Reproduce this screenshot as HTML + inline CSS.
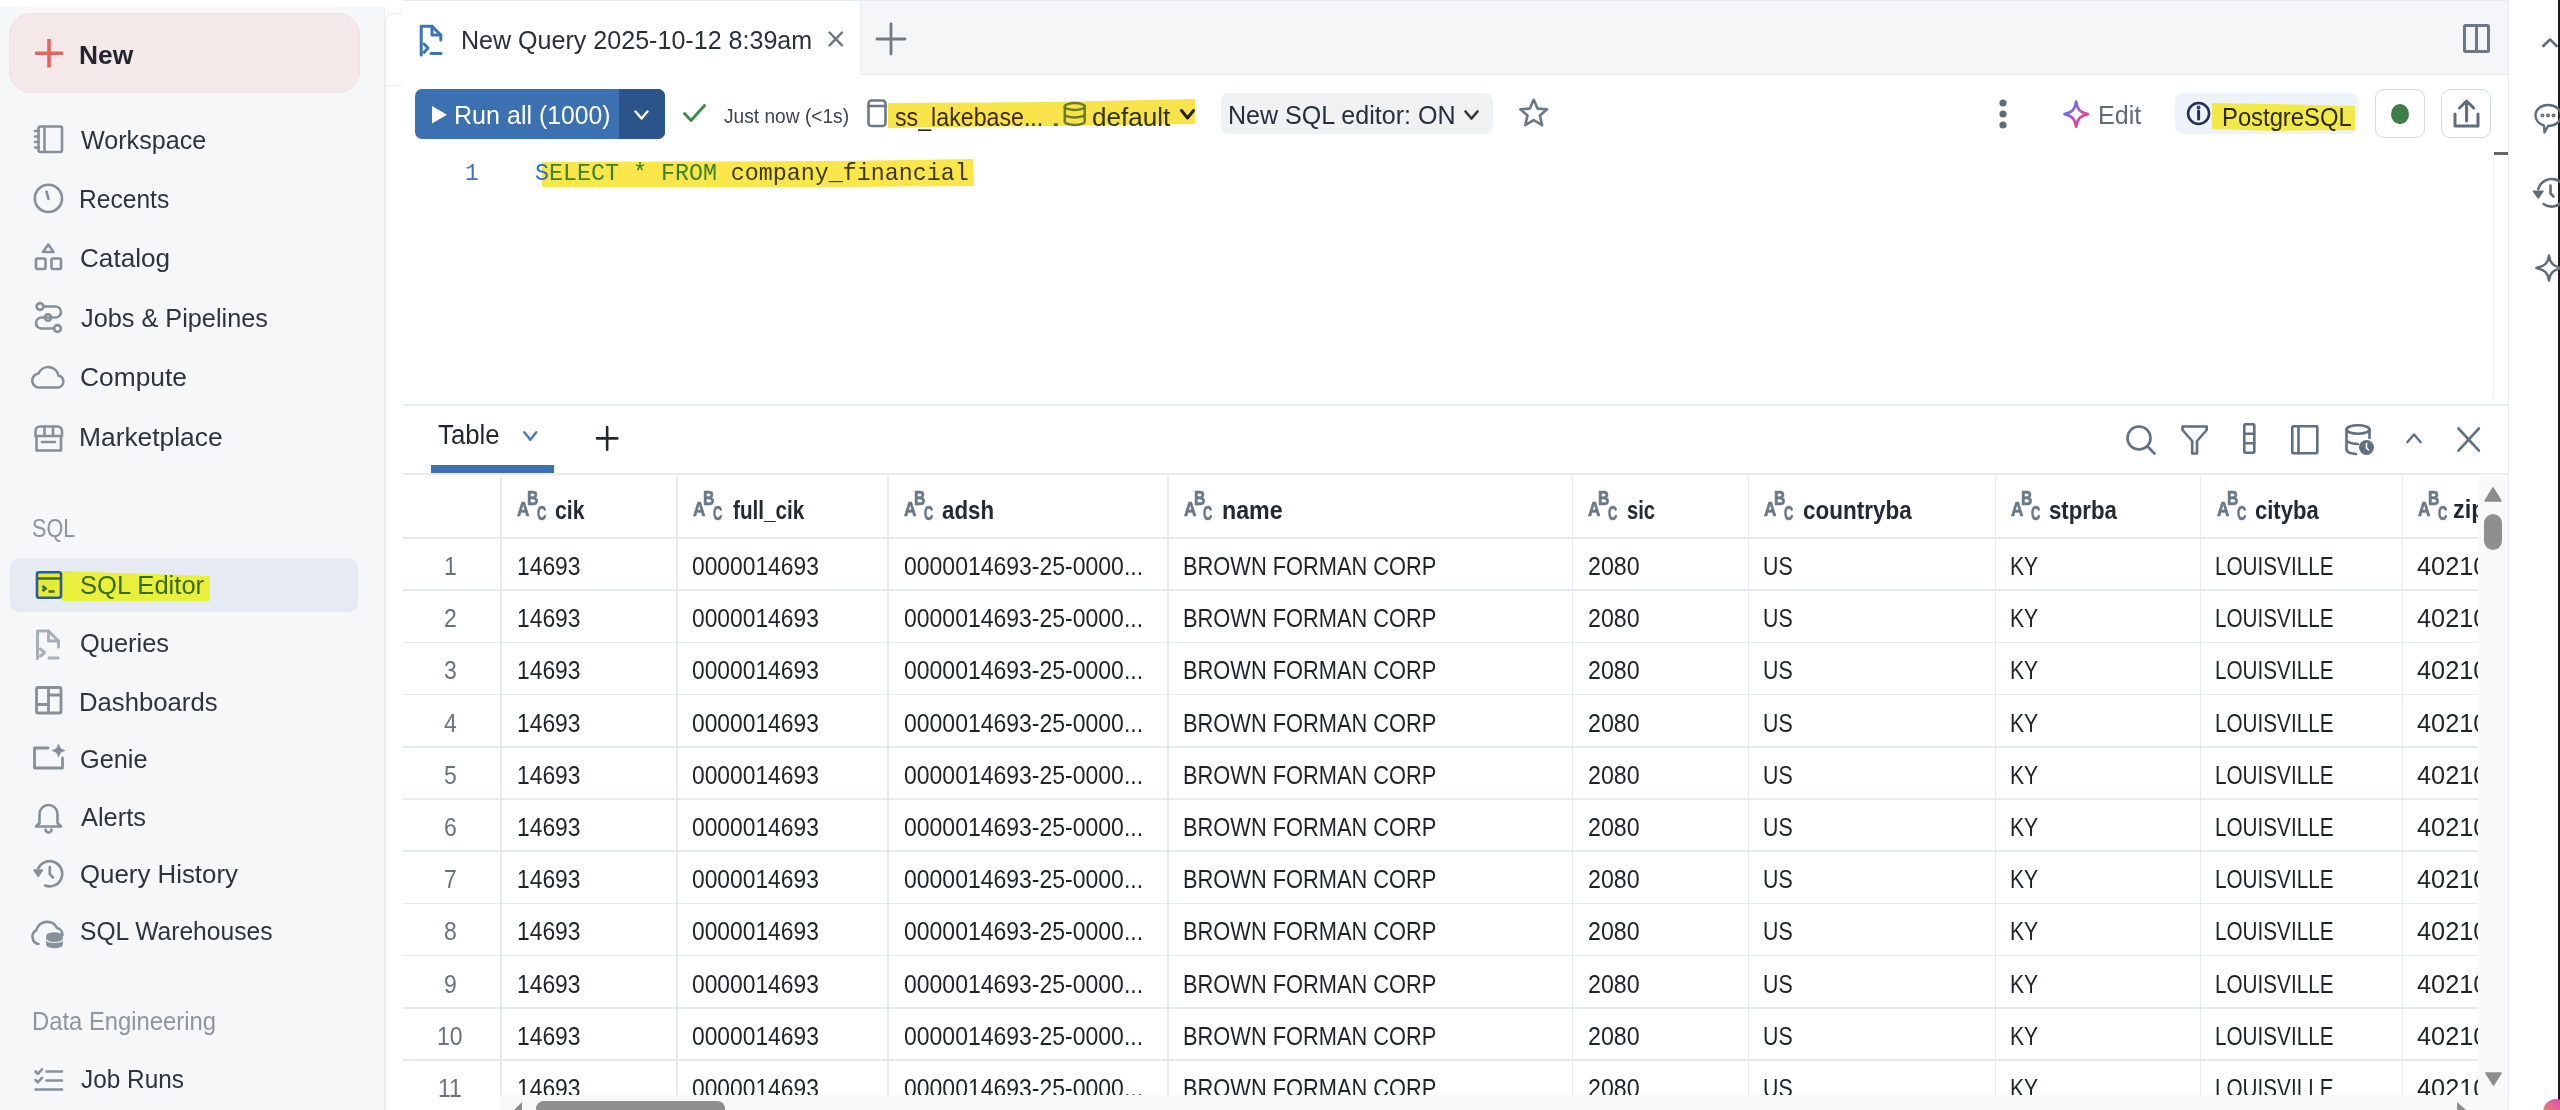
<!DOCTYPE html><html><head><meta charset="utf-8"><style>
html,body{margin:0;padding:0;width:2560px;height:1110px;overflow:hidden;background:#fff;}
.t{position:absolute;white-space:nowrap;transform-origin:0 0;}
.r{position:absolute;box-sizing:border-box;}
svg.r{overflow:visible}
#wrap{position:absolute;left:0;top:0;width:2560px;height:1110px;overflow:hidden;filter:blur(0.65px);}
</style></head><body><div id="wrap">
<div class="r" style="left:0px;top:7px;width:385px;height:1103px;background:#f6f7f9;"></div>
<div class="r" style="left:384px;top:7px;width:1px;height:1103px;background:#eceef1;"></div>
<div class="r" style="left:0px;top:7px;width:1px;height:1103px;background:#fbfbfc;"></div>
<div class="r" style="left:9px;top:12.6px;width:351px;height:80.9px;background:#f4e8e9;border:1px solid #f1e0e1;border-radius:22px;"></div>
<svg class="r" style="left:35px;top:39px;width:28px;height:28.5px;" viewBox="0 0 28 28" preserveAspectRatio="none"><path d="M14 0V28M0 14H28" stroke="#e8625e" stroke-width="3.6"/></svg>
<div class="t" style="left:79.29px;top:41.79px;font-size:26px;line-height:26px;font-family:'Liberation Sans',sans-serif;font-weight:700;color:#1f2630;transform:scaleX(1.0141);">New</div>
<div class="t" style="left:80.87px;top:126.99px;font-size:26px;line-height:26px;font-family:'Liberation Sans',sans-serif;font-weight:400;color:#2d3440;transform:scaleX(0.9666);">Workspace</div>
<div class="t" style="left:79.03px;top:185.99px;font-size:26px;line-height:26px;font-family:'Liberation Sans',sans-serif;font-weight:400;color:#2d3440;transform:scaleX(0.9456);">Recents</div>
<div class="t" style="left:79.69px;top:244.99px;font-size:26px;line-height:26px;font-family:'Liberation Sans',sans-serif;font-weight:400;color:#2d3440;transform:scaleX(1.0049);">Catalog</div>
<div class="t" style="left:80.62px;top:304.99px;font-size:26px;line-height:26px;font-family:'Liberation Sans',sans-serif;font-weight:400;color:#2d3440;transform:scaleX(0.9724);">Jobs &amp; Pipelines</div>
<div class="t" style="left:79.68px;top:364.49px;font-size:26px;line-height:26px;font-family:'Liberation Sans',sans-serif;font-weight:400;color:#2d3440;transform:scaleX(1.0140);">Compute</div>
<div class="t" style="left:78.89px;top:423.99px;font-size:26px;line-height:26px;font-family:'Liberation Sans',sans-serif;font-weight:400;color:#2d3440;transform:scaleX(1.0143);">Marketplace</div>
<div class="t" style="left:32.03px;top:515.29px;font-size:26px;line-height:26px;font-family:'Liberation Sans',sans-serif;font-weight:400;color:#8d959d;transform:scaleX(0.8312);">SQL</div>
<div class="r" style="left:9.7px;top:557.6px;width:347.90000000000003px;height:54.39999999999998px;background:#e6ebf3;border-radius:9px;"></div>
<svg class="r" style="left:60px;top:568px;width:152px;height:36px" viewBox="0 0 152 36"><path d="M2 3 L150 8 L150 33 L2 33 Z" fill="#e8f03c"/></svg>
<div class="t" style="left:79.85px;top:571.99px;font-size:26px;line-height:26px;font-family:'Liberation Sans',sans-serif;font-weight:400;color:#3b6a12;transform:scaleX(0.9836);">SQL Editor</div>
<div class="t" style="left:79.86px;top:630.39px;font-size:26px;line-height:26px;font-family:'Liberation Sans',sans-serif;font-weight:400;color:#2d3440;transform:scaleX(0.9784);">Queries</div>
<div class="t" style="left:78.95px;top:689.29px;font-size:26px;line-height:26px;font-family:'Liberation Sans',sans-serif;font-weight:400;color:#2d3440;transform:scaleX(0.9880);">Dashboards</div>
<div class="t" style="left:79.74px;top:745.99px;font-size:26px;line-height:26px;font-family:'Liberation Sans',sans-serif;font-weight:400;color:#2d3440;transform:scaleX(0.9728);">Genie</div>
<div class="t" style="left:81.00px;top:803.69px;font-size:26px;line-height:26px;font-family:'Liberation Sans',sans-serif;font-weight:400;color:#2d3440;transform:scaleX(0.9768);">Alerts</div>
<div class="t" style="left:79.84px;top:860.79px;font-size:26px;line-height:26px;font-family:'Liberation Sans',sans-serif;font-weight:400;color:#2d3440;transform:scaleX(0.9937);">Query History</div>
<div class="t" style="left:79.89px;top:917.99px;font-size:26px;line-height:26px;font-family:'Liberation Sans',sans-serif;font-weight:400;color:#2d3440;transform:scaleX(0.9471);">SQL Warehouses</div>
<div class="t" style="left:31.59px;top:1008.29px;font-size:26px;line-height:26px;font-family:'Liberation Sans',sans-serif;font-weight:400;color:#8d959d;transform:scaleX(0.9159);">Data Engineering</div>
<div class="t" style="left:80.63px;top:1065.69px;font-size:26px;line-height:26px;font-family:'Liberation Sans',sans-serif;font-weight:400;color:#2d3440;transform:scaleX(0.9369);">Job Runs</div>
<svg class="r" style="left:33px;top:124px;width:32px;height:31px" viewBox="33 124 32 31"><g fill="none" stroke="#86909b" stroke-width="2.6" stroke-linejoin="round" stroke-linecap="round"><rect x="38.5" y="126.5" width="23.5" height="25.5" rx="2"/><path d="M44.5 126.5V152"/><path d="M35 131H39M35 136.5H39M35 142H39M35 147.5H39"/></g></svg>
<svg class="r" style="left:32px;top:182px;width:34px;height:34px" viewBox="32 182 34 34"><g fill="none" stroke="#86909b" stroke-width="2.6" stroke-linejoin="round" stroke-linecap="round"><circle cx="48.4" cy="198.4" r="13.6"/><path d="M46.5 191.5L48.5 199"/></g></svg>
<svg class="r" style="left:32px;top:241px;width:34px;height:32px" viewBox="32 241 34 32"><g fill="none" stroke="#86909b" stroke-width="2.6" stroke-linejoin="round" stroke-linecap="round"><path d="M48.3 244.5L53.5 252H43Z"/><rect x="36" y="258.5" width="9.5" height="10.5" rx="1.5"/><rect x="51.5" y="258.5" width="9.5" height="10.5" rx="1.5"/></g></svg>
<svg class="r" style="left:32px;top:300px;width:34px;height:36px" viewBox="32 300 34 36"><g fill="none" stroke="#86909b" stroke-width="2.6" stroke-linejoin="round" stroke-linecap="round"><circle cx="40" cy="306.5" r="3.4"/><path d="M43.4 306.5H55.5a5.5 5.5 0 0 1 0 11H41.5a5.5 5.5 0 0 0 0 11H54"/><circle cx="48" cy="317.5" r="3.2"/><circle cx="57.5" cy="328.5" r="3.4"/></g></svg>
<svg class="r" style="left:31px;top:362px;width:36px;height:29px" viewBox="31 362 36 29"><g fill="none" stroke="#86909b" stroke-width="2.6" stroke-linejoin="round" stroke-linecap="round"><path d="M40 387.5H57.5a6 6 0 0 0 1-11.9A10.5 10.5 0 0 0 38.5 373.5A7 7 0 0 0 40 387.5Z"/></g></svg>
<svg class="r" style="left:33px;top:422px;width:32px;height:32px" viewBox="33 422 32 32"><g fill="none" stroke="#86909b" stroke-width="2.6" stroke-linejoin="round" stroke-linecap="round"><path d="M36.5 436V450.5H61V436"/><path d="M35.5 431.5A4.5 4.5 0 0 1 40 426.5H57.5A4.5 4.5 0 0 1 62 431.5V436H35.5Z"/><path d="M44.5 426.5V436M53 426.5V436"/><path d="M42 442H55"/></g></svg>
<svg class="r" style="left:34px;top:569px;width:30px;height:32px" viewBox="34 569 30 32"><rect x="37" y="572.3" width="24" height="25.5" rx="2" fill="#e3ec3a" stroke="#2f5b93" stroke-width="2.6"/><path d="M38 578.5H60" stroke="#3d6a1a" stroke-width="2.4"/><path d="M42.5 586l3 2.5-3 2.5M48.5 591.5h6" stroke="#3d6a1a" stroke-width="2.6" fill="none"/></svg>
<svg class="r" style="left:34px;top:627px;width:30px;height:35px" viewBox="34 627 30 35"><g fill="none" stroke="#a7b0b9" stroke-width="3" stroke-linejoin="round" stroke-linecap="round"><path d="M37.5 658.5V631H48.5L58.5 641V647"/><path d="M48.5 631V641H58.5"/><path d="M40.5 649l4 3.5-4 3.5M49 658h9"/></g></svg>
<svg class="r" style="left:33px;top:684px;width:32px;height:33px" viewBox="33 684 32 33"><g fill="none" stroke="#86909b" stroke-width="2.8" stroke-linejoin="round" stroke-linecap="round"><rect x="36.5" y="687.5" width="24.5" height="25.5" rx="1.5"/><path d="M48.5 687.5V713M36.5 704.5H48.5M48.5 695H61"/></g></svg>
<svg class="r" style="left:31px;top:743px;width:35px;height:29px" viewBox="31 743 35 29"><g fill="none" stroke="#86909b" stroke-width="2.8" stroke-linejoin="round" stroke-linecap="round"><path d="M48 748H34.5V768H62.5V758"/></g></svg>
<svg class="r" style="left:52px;top:743px;width:14px;height:15px" viewBox="52 743 14 15"><path d="M58.5 744.5Q59.5 749.5 64.5 750.5Q59.5 751.5 58.5 756.5Q57.5 751.5 52.5 750.5Q57.5 749.5 58.5 744.5Z" fill="#86909b" stroke="#86909b" stroke-width="1.2" stroke-linejoin="round"/></svg>
<svg class="r" style="left:33px;top:799px;width:31px;height:35px" viewBox="33 799 31 35"><g fill="none" stroke="#86909b" stroke-width="2.6" stroke-linejoin="round" stroke-linecap="round"><path d="M39.5 823V814a9 9 0 0 1 18 0V823L61 826.5H36Z"/><path d="M45.5 829.5a3 3 0 0 0 6 0"/></g></svg>
<svg class="r" style="left:31px;top:856px;width:36px;height:34px" viewBox="31 856 36 34"><g fill="none" stroke="#86909b" stroke-width="2.6" stroke-linejoin="round" stroke-linecap="round"><path d="M45 885.5A12.6 12.6 0 1 0 38.2 868.5"/><path d="M49.8 867V874L53 877.5"/></g></svg>
<svg class="r" style="left:31px;top:866px;width:14px;height:14px" viewBox="31 866 14 14"><path d="M34 870H42.5L38.2 876.5Z" fill="#86909b" stroke="#86909b" stroke-width="1.4" stroke-linejoin="round"/></svg>
<svg class="r" style="left:31px;top:917px;width:36px;height:33px" viewBox="31 917 36 33"><g fill="none" stroke="#86909b" stroke-width="2.6" stroke-linejoin="round" stroke-linecap="round"><path d="M38.5 944A7.5 7.5 0 0 1 36.5 930A11 11 0 0 1 57 928A7 7 0 0 1 62.5 935"/></g></svg>
<svg class="r" style="left:44px;top:930px;width:20px;height:20px" viewBox="44 930 20 20"><ellipse cx="54.5" cy="935.5" rx="8.3" ry="3.2" fill="#86909b"/><path d="M46.2 935.5V945a8.3 3.2 0 0 0 16.6 0V935.5Z" fill="#86909b"/><path d="M46.5 939.5a8 3 0 0 0 16 0" stroke="#e9ecef" stroke-width="1.2" fill="none"/></svg>
<svg class="r" style="left:32px;top:1064px;width:34px;height:30px" viewBox="32 1064 34 30"><g fill="none" stroke="#86909b" stroke-width="2.6" stroke-linejoin="round" stroke-linecap="round"><path d="M35.5 1071.5l2.3 2.3 4.2-4.5M35.5 1080l2.3 2.3 4.2-4.5M46.5 1071.5H62M46.5 1080.5H62M35.5 1089.5H62"/></g></svg>
<div class="r" style="left:385px;top:13px;width:2125px;height:1097px;background:#fff;border-left:1px solid #e6e9ed;border-top:1px solid #e6e9ed;border-top-left-radius:9px;"></div>
<div class="r" style="left:385px;top:0px;width:18px;height:7px;background:#fff;"></div>
<div class="r" style="left:385px;top:85px;width:18px;height:1px;background:#eceef1;"></div>
<div class="r" style="left:403px;top:0px;width:2105px;height:1px;background:#e7eaee;"></div>
<div class="r" style="left:403px;top:1px;width:457px;height:74px;background:#fff;"></div>
<div class="r" style="left:860px;top:1px;width:1648px;height:74px;background:#f5f6f8;border-bottom:1px solid #e6e9ed;border-left:1px solid #eceef1;"></div>
<svg class="r" style="left:419px;top:24px;width:24px;height:31.299999999999997px;" viewBox="0 0 24 31.3" preserveAspectRatio="none"><g fill="none" stroke="#3c72b6" stroke-width="3" stroke-linejoin="round" stroke-linecap="round"><path d="M2.2 31V2.2H13L21.8 11V16" /><path d="M13 2.2V11H21.8" /><path d="M5 20l4 4-4 4.5M12 29.5h10"/></g></svg>
<div class="t" style="left:461.39px;top:26.59px;font-size:26px;line-height:26px;font-family:'Liberation Sans',sans-serif;font-weight:400;color:#2a3038;transform:scaleX(0.9642);">New Query 2025-10-12 8:39am</div>
<svg class="r" style="left:828px;top:31px;width:15.5px;height:15.799999999999997px;" viewBox="0 0 15.5 15.8" preserveAspectRatio="none"><g fill="none" stroke="#6b7580" stroke-width="2.4" stroke-linejoin="round" stroke-linecap="round"><path d="M1.5 1.5L14 14.3M14 1.5L1.5 14.3"/></g></svg>
<svg class="r" style="left:877px;top:24px;width:28px;height:30px;" viewBox="0 0 28 30" preserveAspectRatio="none"><g fill="none" stroke="#6f7b86" stroke-width="2.8" stroke-linejoin="round" stroke-linecap="round"><path d="M14 0V30M0 15H28"/></g></svg>
<svg class="r" style="left:2463px;top:24px;width:27px;height:29px;" viewBox="0 0 27 29" preserveAspectRatio="none"><g fill="none" stroke="#6b7886" stroke-width="3" stroke-linejoin="round" stroke-linecap="round"><rect x="1.5" y="1.5" width="24" height="26" rx="1"/><path d="M13.5 1.5V27.5"/></g></svg>
<div class="r" style="left:415px;top:88.75px;width:250px;height:49.75px;background:#3c71b1;border-radius:7px;"></div>
<div class="r" style="left:618.5px;top:88.75px;width:46.5px;height:49.75px;background:#2a548a;border-radius:0 7px 7px 0;"></div>
<svg class="r" style="left:432px;top:105.6px;width:15px;height:17.400000000000006px;" viewBox="0 0 15 17.4" preserveAspectRatio="none"><path d="M0 0L15 8.7L0 17.4Z" fill="#fff"/></svg>
<div class="t" style="left:453.59px;top:101.74px;font-size:26px;line-height:26px;font-family:'Liberation Sans',sans-serif;font-weight:400;color:#ffffff;transform:scaleX(0.9651);">Run all</div>
<div class="t" style="left:539.12px;top:101.74px;font-size:26px;line-height:26px;font-family:'Liberation Sans',sans-serif;font-weight:400;color:#ffffff;transform:scaleX(0.9497);">(1000)</div>
<svg class="r" style="left:634px;top:110px;width:15px;height:10px;" viewBox="0 0 15 10" preserveAspectRatio="none"><g fill="none" stroke="#fff" stroke-width="2.4" stroke-linejoin="round" stroke-linecap="round"><path d="M1.5 1.5L7.5 8.5L13.5 1.5"/></g></svg>
<svg class="r" style="left:683px;top:104px;width:23px;height:18.5px;" viewBox="0 0 23 18.5" preserveAspectRatio="none"><g fill="none" stroke="#3f8a4f" stroke-width="3" stroke-linejoin="round" stroke-linecap="round"><path d="M1.5 9.5L8 16.5L21.5 1.5"/></g></svg>
<div class="t" style="left:723.71px;top:104.72px;font-size:21px;line-height:21px;font-family:'Liberation Sans',sans-serif;font-weight:400;color:#3a4450;transform:scaleX(0.9118);">Just now (&lt;1s)</div>
<svg class="r" style="left:867px;top:99px;width:20px;height:28.5px;" viewBox="0 0 20 28.5" preserveAspectRatio="none"><g fill="none" stroke="#6b7886" stroke-width="2.6" stroke-linejoin="round" stroke-linecap="round"><rect x="1.5" y="1.5" width="17" height="25.5" rx="3"/><path d="M1.5 7H18.5"/></g></svg>
<svg class="r" style="left:888px;top:98px;width:310px;height:32px" viewBox="0 0 310 32"><path d="M0 5 L160 4 L307 1 L307 26 L160 28 L0 30 Z" fill="#f8e44a"/></svg>
<div class="t" style="left:894.90px;top:103.59px;font-size:26px;line-height:26px;font-family:'Liberation Sans',sans-serif;font-weight:400;color:#3b2a10;transform:scaleX(0.8919);">ss_lakebase...</div>
<div class="t" style="left:1050.21px;top:103.59px;font-size:26px;line-height:26px;font-family:'Liberation Sans',sans-serif;font-weight:400;color:#6a6a2a;transform:scaleX(1.6194);">.</div>
<svg class="r" style="left:1062.5px;top:102px;width:23.5px;height:24px;" viewBox="0 0 23.5 24" preserveAspectRatio="none"><g fill="none" stroke="#6b7a2a" stroke-width="2.4" stroke-linejoin="round" stroke-linecap="round"><ellipse cx="11.75" cy="4.5" rx="10" ry="3.5"/><path d="M1.75 4.5V19.5A10 3.5 0 0 0 21.75 19.5V4.5M1.75 12A10 3.5 0 0 0 21.75 12"/></g></svg>
<div class="t" style="left:1091.96px;top:103.59px;font-size:26px;line-height:26px;font-family:'Liberation Sans',sans-serif;font-weight:400;color:#2f3310;transform:scaleX(1.0022);">default</div>
<svg class="r" style="left:1180px;top:109px;width:15px;height:11px;" viewBox="0 0 15 11" preserveAspectRatio="none"><g fill="none" stroke="#222" stroke-width="3" stroke-linejoin="round" stroke-linecap="round"><path d="M1.5 1.5L7.5 9L13.5 1.5"/></g></svg>
<div class="r" style="left:1221.4px;top:93.4px;width:272.0999999999999px;height:40.599999999999994px;background:#f0f1f3;border-radius:8px;"></div>
<div class="t" style="left:1228.49px;top:102.29px;font-size:26px;line-height:26px;font-family:'Liberation Sans',sans-serif;font-weight:400;color:#26303c;transform:scaleX(0.9642);">New SQL editor: ON</div>
<svg class="r" style="left:1464px;top:110px;width:15px;height:10px;" viewBox="0 0 15 10" preserveAspectRatio="none"><g fill="none" stroke="#333" stroke-width="2.6" stroke-linejoin="round" stroke-linecap="round"><path d="M1.5 1.5L7.5 8.5L13.5 1.5"/></g></svg>
<svg class="r" style="left:1519px;top:97.6px;width:29.40000000000009px;height:30.200000000000003px;" viewBox="0 0 29.4 30.2" preserveAspectRatio="none"><g fill="none" stroke="#6b7886" stroke-width="2.6" stroke-linejoin="round" stroke-linecap="round"><path d="M14.7 1.8L18.6 10.6L28 11.3L20.9 17.5L23.1 27.2L14.7 22.1L6.3 27.2L8.5 17.5L1.4 11.3L10.8 10.6Z"/></g></svg>
<svg class="r" style="left:1999px;top:99px;width:8px;height:30px;" viewBox="0 0 8 30" preserveAspectRatio="none"><circle cx="4" cy="4" r="3.6" fill="#5f6d7a"/><circle cx="4" cy="15" r="3.6" fill="#5f6d7a"/><circle cx="4" cy="26" r="3.6" fill="#5f6d7a"/></svg>
<svg class="r" style="left:2062.6px;top:99.7px;width:26.300000000000182px;height:28.299999999999997px;" viewBox="0 0 26 28" preserveAspectRatio="none"><defs><linearGradient id="sg" x1="0" y1="0" x2="1" y2="1"><stop offset="0.15" stop-color="#4f7cf5"/><stop offset="0.5" stop-color="#b44fd8"/><stop offset="0.85" stop-color="#f2475c"/></linearGradient></defs><path d="M13 1.5C14 9 17 12.5 24.5 14C17 15.5 14 19 13 26.5C12 19 9 15.5 1.5 14C9 12.5 12 9 13 1.5Z" fill="none" stroke="url(#sg)" stroke-width="2.6" stroke-linejoin="round"/></svg>
<div class="t" style="left:2097.99px;top:102.29px;font-size:26px;line-height:26px;font-family:'Liberation Sans',sans-serif;font-weight:400;color:#5f6b78;transform:scaleX(0.9645);">Edit</div>
<div class="r" style="left:2175px;top:93px;width:183px;height:41px;background:#eef2fb;border-radius:8px;"></div>
<svg class="r" style="left:2186.8px;top:101px;width:23.199999999999818px;height:25px;" viewBox="0 0 23.2 25" preserveAspectRatio="none"><g fill="none" stroke="#22305a" stroke-width="2.6" stroke-linejoin="round" stroke-linecap="round"><circle cx="11.6" cy="12.5" r="10.5"/><path d="M11.6 10V18" stroke-width="3"/><circle cx="11.6" cy="6.5" r="0.6" fill="#22305a"/></g></svg>
<svg class="r" style="left:2212px;top:100px;width:145px;height:32px" viewBox="0 0 145 32"><path d="M0 3 L60 4 L143 6 L143 30 L60 31 L0 29 Z" fill="#f1e84a"/></svg>
<div class="t" style="left:2222.10px;top:103.99px;font-size:26px;line-height:26px;font-family:'Liberation Sans',sans-serif;font-weight:400;color:#2e2a10;transform:scaleX(0.9156);">PostgreSQL</div>
<div class="r" style="left:2375px;top:89.3px;width:50px;height:49.2px;background:#fff;border:1.5px solid #d3dbe3;border-radius:9px;"></div>
<svg class="r" style="left:2391px;top:103.5px;width:18px;height:20.299999999999997px;" viewBox="0 0 18 20" preserveAspectRatio="none"><ellipse cx="9" cy="10" rx="9" ry="10" fill="#3e7f4b"/></svg>
<div class="r" style="left:2441px;top:89.3px;width:50px;height:49.2px;background:#fff;border:1.5px solid #d3dbe3;border-radius:9px;"></div>
<svg class="r" style="left:2452.8px;top:99px;width:27.199999999999818px;height:29px;" viewBox="0 0 27.2 29" preserveAspectRatio="none"><g fill="none" stroke="#5f6d7a" stroke-width="3" stroke-linejoin="round" stroke-linecap="round"><path d="M2 15V27H25V15"/><path d="M13.6 22V2.5M6.5 9L13.6 2L20.7 9"/></g></svg>
<div class="t" style="left:465.40px;top:162.21px;font-size:24px;line-height:24px;font-family:'Liberation Mono',monospace;font-weight:400;color:#3f74c0;transform:scaleX(0.9549);">1</div>
<svg class="r" style="left:540px;top:158px;width:436px;height:32px" viewBox="0 0 436 32"><path d="M2 4 L300 3 L433 1 L434 28 L300 29 L2 29 Z" fill="#f9e64a"/></svg>
<div class="t" style="left:535.07px;top:162.21px;font-size:24px;line-height:24px;font-family:'Liberation Mono',monospace;transform:scaleX(0.9714);"><span style="color:#2f6fc0">S</span><span style="color:#3d7f2a">ELECT * FROM</span> <span style="color:#3d3716">company_financial</span></div>
<div class="r" style="left:2493px;top:153px;width:1px;height:246px;background:#eef0f2;"></div>
<div class="r" style="left:2494px;top:152px;width:14px;height:3px;background:#62666b;"></div>
<div class="r" style="left:2508px;top:0px;width:1px;height:1110px;background:#e8ebef;"></div>
<div class="r" style="left:403px;top:404px;width:2105px;height:1.5px;background:#e8ebef;"></div>
<div class="r" style="left:403px;top:473px;width:2105px;height:1.5px;background:#e8ebef;"></div>
<div class="t" style="left:438.08px;top:422.44px;font-size:27px;line-height:27px;font-family:'Liberation Sans',sans-serif;font-weight:400;color:#1f262e;transform:scaleX(0.9542);">Table</div>
<svg class="r" style="left:523px;top:431px;width:14.600000000000023px;height:10px;" viewBox="0 0 14.6 10" preserveAspectRatio="none"><g fill="none" stroke="#4a78b8" stroke-width="2.4" stroke-linejoin="round" stroke-linecap="round"><path d="M1.3 1.3L7.3 8.7L13.3 1.3"/></g></svg>
<div class="r" style="left:431px;top:464.6px;width:123px;height:8.099999999999966px;background:#3c70af;"></div>
<svg class="r" style="left:597px;top:427px;width:20.299999999999955px;height:22.80000000000001px;" viewBox="0 0 20.3 22.8" preserveAspectRatio="none"><g fill="none" stroke="#22272e" stroke-width="2.6" stroke-linejoin="round" stroke-linecap="round"><path d="M10.15 0V22.8M0 11.4H20.3"/></g></svg>
<svg class="r" style="left:2126px;top:424.5px;width:30px;height:30.5px;" viewBox="0 0 30 30.5" preserveAspectRatio="none"><g fill="none" stroke="#5f7080" stroke-width="2.6" stroke-linejoin="round" stroke-linecap="round"><circle cx="13" cy="13" r="11.5"/><path d="M21.5 21.5L28.5 28.5"/></g></svg>
<svg class="r" style="left:2180.8px;top:424.5px;width:27.199999999999818px;height:29.5px;" viewBox="0 0 27.2 29.5" preserveAspectRatio="none"><g fill="none" stroke="#5f7080" stroke-width="2.6" stroke-linejoin="round" stroke-linecap="round"><path d="M1.5 1.5H25.7V5L16 16V28.5H11.2V16L1.5 5Z"/></g></svg>
<svg class="r" style="left:2243px;top:423px;width:12.5px;height:31px;" viewBox="0 0 12.5 31" preserveAspectRatio="none"><g fill="none" stroke="#5f7080" stroke-width="2.6" stroke-linejoin="round" stroke-linecap="round"><rect x="1.3" y="1.3" width="10" height="28.4" rx="1"/><path d="M1.3 10.8H11.3M1.3 20.2H11.3"/></g></svg>
<svg class="r" style="left:2290.5px;top:424.5px;width:27.5px;height:29.5px;" viewBox="0 0 27.5 29.5" preserveAspectRatio="none"><g fill="none" stroke="#5f7080" stroke-width="2.6" stroke-linejoin="round" stroke-linecap="round"><rect x="1.3" y="1.3" width="25" height="27" rx="1"/><path d="M7.5 1.3V28.3"/></g></svg>
<svg class="r" style="left:2345px;top:424px;width:30px;height:31.69999999999999px;" viewBox="0 0 30 31.7" preserveAspectRatio="none"><g fill="none" stroke="#5f7080" stroke-width="2.6" stroke-linejoin="round" stroke-linecap="round"><ellipse cx="13" cy="5.5" rx="11.5" ry="4.2"/><path d="M1.5 5.5V26A11.5 4.2 0 0 0 11 30M1.5 16A11.5 4.5 0 0 0 13 20M24.5 5.5V14"/><circle cx="21.5" cy="23.5" r="7.5" fill="#5f7080" stroke="none"/><path d="M21.5 19.5V24L23.5 26" stroke="#fff" stroke-width="1.6"/></g></svg>
<svg class="r" style="left:2405.5px;top:433px;width:16.0px;height:10.5px;" viewBox="0 0 16 10.5" preserveAspectRatio="none"><g fill="none" stroke="#5f7080" stroke-width="2.4" stroke-linejoin="round" stroke-linecap="round"><path d="M1.3 9.2L8 1.5L14.7 9.2"/></g></svg>
<svg class="r" style="left:2456.6px;top:426.8px;width:23.40000000000009px;height:25.19999999999999px;" viewBox="0 0 23.4 25.2" preserveAspectRatio="none"><g fill="none" stroke="#5f7080" stroke-width="2.6" stroke-linejoin="round" stroke-linecap="round"><path d="M1.5 1.5L21.9 23.7M21.9 1.5L1.5 23.7"/></g></svg>
<div class="r" style="left:403px;top:537.25px;width:2075px;height:1.5px;background:#e6eaef;"></div>
<div class="r" style="left:403px;top:589.45px;width:2075px;height:1.5px;background:#e6eaef;"></div>
<div class="r" style="left:403px;top:641.65px;width:2075px;height:1.5px;background:#e6eaef;"></div>
<div class="r" style="left:403px;top:693.85px;width:2075px;height:1.5px;background:#e6eaef;"></div>
<div class="r" style="left:403px;top:746.05px;width:2075px;height:1.5px;background:#e6eaef;"></div>
<div class="r" style="left:403px;top:798.25px;width:2075px;height:1.5px;background:#e6eaef;"></div>
<div class="r" style="left:403px;top:850.45px;width:2075px;height:1.5px;background:#e6eaef;"></div>
<div class="r" style="left:403px;top:902.65px;width:2075px;height:1.5px;background:#e6eaef;"></div>
<div class="r" style="left:403px;top:954.85px;width:2075px;height:1.5px;background:#e6eaef;"></div>
<div class="r" style="left:403px;top:1007.05px;width:2075px;height:1.5px;background:#e6eaef;"></div>
<div class="r" style="left:403px;top:1059.25px;width:2075px;height:1.5px;background:#e6eaef;"></div>
<div class="r" style="left:500px;top:477px;width:1.5px;height:618px;background:#e6eaef;"></div>
<div class="r" style="left:676px;top:477px;width:1.5px;height:618px;background:#e6eaef;"></div>
<div class="r" style="left:887.4px;top:477px;width:1.5px;height:618px;background:#e6eaef;"></div>
<div class="r" style="left:1167px;top:477px;width:1.5px;height:618px;background:#e6eaef;"></div>
<div class="r" style="left:1571.6px;top:477px;width:1.5px;height:618px;background:#e6eaef;"></div>
<div class="r" style="left:1747.6px;top:477px;width:1.5px;height:618px;background:#e6eaef;"></div>
<div class="r" style="left:1994.5px;top:477px;width:1.5px;height:618px;background:#e6eaef;"></div>
<div class="r" style="left:2199.6px;top:477px;width:1.5px;height:618px;background:#e6eaef;"></div>
<div class="r" style="left:2401.5px;top:477px;width:1.5px;height:618px;background:#e6eaef;"></div>
<div class="t" style="left:517.07px;top:498.64px;font-size:20.5px;line-height:20.5px;font-family:'Liberation Sans',sans-serif;font-weight:700;color:#697886;transform:scaleX(0.8373);-webkit-text-stroke:0.7px #697886">A</div>
<div class="t" style="left:527.18px;top:488.14px;font-size:20.5px;line-height:20.5px;font-family:'Liberation Sans',sans-serif;font-weight:700;color:#697886;transform:scaleX(0.7677);-webkit-text-stroke:0.7px #697886">B</div>
<div class="t" style="left:536.89px;top:502.84px;font-size:20.5px;line-height:20.5px;font-family:'Liberation Sans',sans-serif;font-weight:700;color:#697886;transform:scaleX(0.6256);-webkit-text-stroke:0.7px #697886">C</div>
<div class="t" style="left:555.15px;top:496.99px;font-size:26px;line-height:26px;font-family:'Liberation Sans',sans-serif;font-weight:700;color:#232a31;transform:scaleX(0.8148);">cik</div>
<div class="t" style="left:693.07px;top:498.64px;font-size:20.5px;line-height:20.5px;font-family:'Liberation Sans',sans-serif;font-weight:700;color:#697886;transform:scaleX(0.8373);-webkit-text-stroke:0.7px #697886">A</div>
<div class="t" style="left:703.18px;top:488.14px;font-size:20.5px;line-height:20.5px;font-family:'Liberation Sans',sans-serif;font-weight:700;color:#697886;transform:scaleX(0.7677);-webkit-text-stroke:0.7px #697886">B</div>
<div class="t" style="left:712.89px;top:502.84px;font-size:20.5px;line-height:20.5px;font-family:'Liberation Sans',sans-serif;font-weight:700;color:#697886;transform:scaleX(0.6256);-webkit-text-stroke:0.7px #697886">C</div>
<div class="t" style="left:732.69px;top:496.99px;font-size:26px;line-height:26px;font-family:'Liberation Sans',sans-serif;font-weight:700;color:#232a31;transform:scaleX(0.7961);">full_cik</div>
<div class="t" style="left:904.07px;top:498.64px;font-size:20.5px;line-height:20.5px;font-family:'Liberation Sans',sans-serif;font-weight:700;color:#697886;transform:scaleX(0.8373);-webkit-text-stroke:0.7px #697886">A</div>
<div class="t" style="left:914.18px;top:488.14px;font-size:20.5px;line-height:20.5px;font-family:'Liberation Sans',sans-serif;font-weight:700;color:#697886;transform:scaleX(0.7677);-webkit-text-stroke:0.7px #697886">B</div>
<div class="t" style="left:923.89px;top:502.84px;font-size:20.5px;line-height:20.5px;font-family:'Liberation Sans',sans-serif;font-weight:700;color:#697886;transform:scaleX(0.6256);-webkit-text-stroke:0.7px #697886">C</div>
<div class="t" style="left:942.33px;top:496.99px;font-size:26px;line-height:26px;font-family:'Liberation Sans',sans-serif;font-weight:700;color:#232a31;transform:scaleX(0.8566);">adsh</div>
<div class="t" style="left:1183.57px;top:498.64px;font-size:20.5px;line-height:20.5px;font-family:'Liberation Sans',sans-serif;font-weight:700;color:#697886;transform:scaleX(0.8373);-webkit-text-stroke:0.7px #697886">A</div>
<div class="t" style="left:1193.68px;top:488.14px;font-size:20.5px;line-height:20.5px;font-family:'Liberation Sans',sans-serif;font-weight:700;color:#697886;transform:scaleX(0.7677);-webkit-text-stroke:0.7px #697886">B</div>
<div class="t" style="left:1203.39px;top:502.84px;font-size:20.5px;line-height:20.5px;font-family:'Liberation Sans',sans-serif;font-weight:700;color:#697886;transform:scaleX(0.6256);-webkit-text-stroke:0.7px #697886">C</div>
<div class="t" style="left:1222.19px;top:496.99px;font-size:26px;line-height:26px;font-family:'Liberation Sans',sans-serif;font-weight:700;color:#232a31;transform:scaleX(0.8933);">name</div>
<div class="t" style="left:1588.07px;top:498.64px;font-size:20.5px;line-height:20.5px;font-family:'Liberation Sans',sans-serif;font-weight:700;color:#697886;transform:scaleX(0.8373);-webkit-text-stroke:0.7px #697886">A</div>
<div class="t" style="left:1598.18px;top:488.14px;font-size:20.5px;line-height:20.5px;font-family:'Liberation Sans',sans-serif;font-weight:700;color:#697886;transform:scaleX(0.7677);-webkit-text-stroke:0.7px #697886">B</div>
<div class="t" style="left:1607.89px;top:502.84px;font-size:20.5px;line-height:20.5px;font-family:'Liberation Sans',sans-serif;font-weight:700;color:#697886;transform:scaleX(0.6256);-webkit-text-stroke:0.7px #697886">C</div>
<div class="t" style="left:1627.29px;top:496.99px;font-size:26px;line-height:26px;font-family:'Liberation Sans',sans-serif;font-weight:700;color:#232a31;transform:scaleX(0.7750);">sic</div>
<div class="t" style="left:1764.07px;top:498.64px;font-size:20.5px;line-height:20.5px;font-family:'Liberation Sans',sans-serif;font-weight:700;color:#697886;transform:scaleX(0.8373);-webkit-text-stroke:0.7px #697886">A</div>
<div class="t" style="left:1774.18px;top:488.14px;font-size:20.5px;line-height:20.5px;font-family:'Liberation Sans',sans-serif;font-weight:700;color:#697886;transform:scaleX(0.7677);-webkit-text-stroke:0.7px #697886">B</div>
<div class="t" style="left:1783.89px;top:502.84px;font-size:20.5px;line-height:20.5px;font-family:'Liberation Sans',sans-serif;font-weight:700;color:#697886;transform:scaleX(0.6256);-webkit-text-stroke:0.7px #697886">C</div>
<div class="t" style="left:1803.10px;top:496.99px;font-size:26px;line-height:26px;font-family:'Liberation Sans',sans-serif;font-weight:700;color:#232a31;transform:scaleX(0.8645);">countryba</div>
<div class="t" style="left:2011.07px;top:498.64px;font-size:20.5px;line-height:20.5px;font-family:'Liberation Sans',sans-serif;font-weight:700;color:#697886;transform:scaleX(0.8373);-webkit-text-stroke:0.7px #697886">A</div>
<div class="t" style="left:2021.18px;top:488.14px;font-size:20.5px;line-height:20.5px;font-family:'Liberation Sans',sans-serif;font-weight:700;color:#697886;transform:scaleX(0.7677);-webkit-text-stroke:0.7px #697886">B</div>
<div class="t" style="left:2030.89px;top:502.84px;font-size:20.5px;line-height:20.5px;font-family:'Liberation Sans',sans-serif;font-weight:700;color:#697886;transform:scaleX(0.6256);-webkit-text-stroke:0.7px #697886">C</div>
<div class="t" style="left:2049.22px;top:496.99px;font-size:26px;line-height:26px;font-family:'Liberation Sans',sans-serif;font-weight:700;color:#232a31;transform:scaleX(0.8555);">stprba</div>
<div class="t" style="left:2216.77px;top:498.64px;font-size:20.5px;line-height:20.5px;font-family:'Liberation Sans',sans-serif;font-weight:700;color:#697886;transform:scaleX(0.8373);-webkit-text-stroke:0.7px #697886">A</div>
<div class="t" style="left:2226.88px;top:488.14px;font-size:20.5px;line-height:20.5px;font-family:'Liberation Sans',sans-serif;font-weight:700;color:#697886;transform:scaleX(0.7677);-webkit-text-stroke:0.7px #697886">B</div>
<div class="t" style="left:2236.59px;top:502.84px;font-size:20.5px;line-height:20.5px;font-family:'Liberation Sans',sans-serif;font-weight:700;color:#697886;transform:scaleX(0.6256);-webkit-text-stroke:0.7px #697886">C</div>
<div class="t" style="left:2255.12px;top:496.99px;font-size:26px;line-height:26px;font-family:'Liberation Sans',sans-serif;font-weight:700;color:#232a31;transform:scaleX(0.8472);">cityba</div>
<div class="t" style="left:2418.07px;top:498.64px;font-size:20.5px;line-height:20.5px;font-family:'Liberation Sans',sans-serif;font-weight:700;color:#697886;transform:scaleX(0.8373);-webkit-text-stroke:0.7px #697886">A</div>
<div class="t" style="left:2428.18px;top:488.14px;font-size:20.5px;line-height:20.5px;font-family:'Liberation Sans',sans-serif;font-weight:700;color:#697886;transform:scaleX(0.7677);-webkit-text-stroke:0.7px #697886">B</div>
<div class="t" style="left:2437.89px;top:502.84px;font-size:20.5px;line-height:20.5px;font-family:'Liberation Sans',sans-serif;font-weight:700;color:#697886;transform:scaleX(0.6256);-webkit-text-stroke:0.7px #697886">C</div>
<div class="r" style="left:2400px;top:480px;width:78px;height:60px;overflow:hidden">
<div class="t" style="left:53.06px;top:16.39px;font-size:26px;line-height:26px;font-family:'Liberation Sans',sans-serif;font-weight:700;color:#1f272d;transform:scaleX(0.90);">zip</div>
</div>
<div class="t" style="left:443.77px;top:554.03px;font-size:25px;line-height:25px;font-family:'Liberation Sans',sans-serif;font-weight:400;color:#6a737d;transform:scaleX(0.9200);">1</div>
<div class="t" style="left:444.12px;top:606.23px;font-size:25px;line-height:25px;font-family:'Liberation Sans',sans-serif;font-weight:400;color:#6a737d;transform:scaleX(0.9200);">2</div>
<div class="t" style="left:444.12px;top:658.43px;font-size:25px;line-height:25px;font-family:'Liberation Sans',sans-serif;font-weight:400;color:#6a737d;transform:scaleX(0.9200);">3</div>
<div class="t" style="left:444.23px;top:710.63px;font-size:25px;line-height:25px;font-family:'Liberation Sans',sans-serif;font-weight:400;color:#6a737d;transform:scaleX(0.9200);">4</div>
<div class="t" style="left:444.12px;top:762.83px;font-size:25px;line-height:25px;font-family:'Liberation Sans',sans-serif;font-weight:400;color:#6a737d;transform:scaleX(0.9200);">5</div>
<div class="t" style="left:444.00px;top:815.03px;font-size:25px;line-height:25px;font-family:'Liberation Sans',sans-serif;font-weight:400;color:#6a737d;transform:scaleX(0.9200);">6</div>
<div class="t" style="left:444.12px;top:867.23px;font-size:25px;line-height:25px;font-family:'Liberation Sans',sans-serif;font-weight:400;color:#6a737d;transform:scaleX(0.9200);">7</div>
<div class="t" style="left:444.06px;top:919.43px;font-size:25px;line-height:25px;font-family:'Liberation Sans',sans-serif;font-weight:400;color:#6a737d;transform:scaleX(0.9200);">8</div>
<div class="t" style="left:444.12px;top:971.63px;font-size:25px;line-height:25px;font-family:'Liberation Sans',sans-serif;font-weight:400;color:#6a737d;transform:scaleX(0.9200);">9</div>
<div class="t" style="left:437.27px;top:1023.83px;font-size:25px;line-height:25px;font-family:'Liberation Sans',sans-serif;font-weight:400;color:#6a737d;transform:scaleX(0.9200);">10</div>
<div class="t" style="left:438.25px;top:1076.03px;font-size:25px;line-height:25px;font-family:'Liberation Sans',sans-serif;font-weight:400;color:#6a737d;transform:scaleX(0.9200);">11</div>
<div class="r" style="left:0;top:0;width:2478px;height:1095px;overflow:hidden">
<div class="t" style="left:516.69px;top:554.03px;font-size:25px;line-height:25px;font-family:'Liberation Sans',sans-serif;font-weight:400;color:#1f2328;transform:scaleX(0.9126);">14693</div>
<div class="t" style="left:692.09px;top:554.03px;font-size:25px;line-height:25px;font-family:'Liberation Sans',sans-serif;font-weight:400;color:#1f2328;transform:scaleX(0.9124);">0000014693</div>
<div class="t" style="left:903.78px;top:554.03px;font-size:25px;line-height:25px;font-family:'Liberation Sans',sans-serif;font-weight:400;color:#1f2328;transform:scaleX(0.9196);">0000014693-25-0000...</div>
<div class="t" style="left:1183.25px;top:554.03px;font-size:25px;line-height:25px;font-family:'Liberation Sans',sans-serif;font-weight:400;color:#1f2328;transform:scaleX(0.8728);">BROWN FORMAN CORP</div>
<div class="t" style="left:1587.84px;top:554.03px;font-size:25px;line-height:25px;font-family:'Liberation Sans',sans-serif;font-weight:400;color:#1f2328;transform:scaleX(0.9290);">2080</div>
<div class="t" style="left:1763.40px;top:554.03px;font-size:25px;line-height:25px;font-family:'Liberation Sans',sans-serif;font-weight:400;color:#1f2328;transform:scaleX(0.8538);">US</div>
<div class="t" style="left:2010.31px;top:554.03px;font-size:25px;line-height:25px;font-family:'Liberation Sans',sans-serif;font-weight:400;color:#1f2328;transform:scaleX(0.8455);">KY</div>
<div class="t" style="left:2215.34px;top:554.03px;font-size:25px;line-height:25px;font-family:'Liberation Sans',sans-serif;font-weight:400;color:#1f2328;transform:scaleX(0.8278);">LOUISVILLE</div>
<div class="t" style="left:2417.49px;top:554.03px;font-size:25px;line-height:25px;font-family:'Liberation Sans',sans-serif;font-weight:400;color:#1f2328;transform:scaleX(1.0128);">40210</div>
<div class="t" style="left:516.69px;top:606.23px;font-size:25px;line-height:25px;font-family:'Liberation Sans',sans-serif;font-weight:400;color:#1f2328;transform:scaleX(0.9126);">14693</div>
<div class="t" style="left:692.09px;top:606.23px;font-size:25px;line-height:25px;font-family:'Liberation Sans',sans-serif;font-weight:400;color:#1f2328;transform:scaleX(0.9124);">0000014693</div>
<div class="t" style="left:903.78px;top:606.23px;font-size:25px;line-height:25px;font-family:'Liberation Sans',sans-serif;font-weight:400;color:#1f2328;transform:scaleX(0.9196);">0000014693-25-0000...</div>
<div class="t" style="left:1183.25px;top:606.23px;font-size:25px;line-height:25px;font-family:'Liberation Sans',sans-serif;font-weight:400;color:#1f2328;transform:scaleX(0.8728);">BROWN FORMAN CORP</div>
<div class="t" style="left:1587.84px;top:606.23px;font-size:25px;line-height:25px;font-family:'Liberation Sans',sans-serif;font-weight:400;color:#1f2328;transform:scaleX(0.9290);">2080</div>
<div class="t" style="left:1763.40px;top:606.23px;font-size:25px;line-height:25px;font-family:'Liberation Sans',sans-serif;font-weight:400;color:#1f2328;transform:scaleX(0.8538);">US</div>
<div class="t" style="left:2010.31px;top:606.23px;font-size:25px;line-height:25px;font-family:'Liberation Sans',sans-serif;font-weight:400;color:#1f2328;transform:scaleX(0.8455);">KY</div>
<div class="t" style="left:2215.34px;top:606.23px;font-size:25px;line-height:25px;font-family:'Liberation Sans',sans-serif;font-weight:400;color:#1f2328;transform:scaleX(0.8278);">LOUISVILLE</div>
<div class="t" style="left:2417.49px;top:606.23px;font-size:25px;line-height:25px;font-family:'Liberation Sans',sans-serif;font-weight:400;color:#1f2328;transform:scaleX(1.0128);">40210</div>
<div class="t" style="left:516.69px;top:658.43px;font-size:25px;line-height:25px;font-family:'Liberation Sans',sans-serif;font-weight:400;color:#1f2328;transform:scaleX(0.9126);">14693</div>
<div class="t" style="left:692.09px;top:658.43px;font-size:25px;line-height:25px;font-family:'Liberation Sans',sans-serif;font-weight:400;color:#1f2328;transform:scaleX(0.9124);">0000014693</div>
<div class="t" style="left:903.78px;top:658.43px;font-size:25px;line-height:25px;font-family:'Liberation Sans',sans-serif;font-weight:400;color:#1f2328;transform:scaleX(0.9196);">0000014693-25-0000...</div>
<div class="t" style="left:1183.25px;top:658.43px;font-size:25px;line-height:25px;font-family:'Liberation Sans',sans-serif;font-weight:400;color:#1f2328;transform:scaleX(0.8728);">BROWN FORMAN CORP</div>
<div class="t" style="left:1587.84px;top:658.43px;font-size:25px;line-height:25px;font-family:'Liberation Sans',sans-serif;font-weight:400;color:#1f2328;transform:scaleX(0.9290);">2080</div>
<div class="t" style="left:1763.40px;top:658.43px;font-size:25px;line-height:25px;font-family:'Liberation Sans',sans-serif;font-weight:400;color:#1f2328;transform:scaleX(0.8538);">US</div>
<div class="t" style="left:2010.31px;top:658.43px;font-size:25px;line-height:25px;font-family:'Liberation Sans',sans-serif;font-weight:400;color:#1f2328;transform:scaleX(0.8455);">KY</div>
<div class="t" style="left:2215.34px;top:658.43px;font-size:25px;line-height:25px;font-family:'Liberation Sans',sans-serif;font-weight:400;color:#1f2328;transform:scaleX(0.8278);">LOUISVILLE</div>
<div class="t" style="left:2417.49px;top:658.43px;font-size:25px;line-height:25px;font-family:'Liberation Sans',sans-serif;font-weight:400;color:#1f2328;transform:scaleX(1.0128);">40210</div>
<div class="t" style="left:516.69px;top:710.63px;font-size:25px;line-height:25px;font-family:'Liberation Sans',sans-serif;font-weight:400;color:#1f2328;transform:scaleX(0.9126);">14693</div>
<div class="t" style="left:692.09px;top:710.63px;font-size:25px;line-height:25px;font-family:'Liberation Sans',sans-serif;font-weight:400;color:#1f2328;transform:scaleX(0.9124);">0000014693</div>
<div class="t" style="left:903.78px;top:710.63px;font-size:25px;line-height:25px;font-family:'Liberation Sans',sans-serif;font-weight:400;color:#1f2328;transform:scaleX(0.9196);">0000014693-25-0000...</div>
<div class="t" style="left:1183.25px;top:710.63px;font-size:25px;line-height:25px;font-family:'Liberation Sans',sans-serif;font-weight:400;color:#1f2328;transform:scaleX(0.8728);">BROWN FORMAN CORP</div>
<div class="t" style="left:1587.84px;top:710.63px;font-size:25px;line-height:25px;font-family:'Liberation Sans',sans-serif;font-weight:400;color:#1f2328;transform:scaleX(0.9290);">2080</div>
<div class="t" style="left:1763.40px;top:710.63px;font-size:25px;line-height:25px;font-family:'Liberation Sans',sans-serif;font-weight:400;color:#1f2328;transform:scaleX(0.8538);">US</div>
<div class="t" style="left:2010.31px;top:710.63px;font-size:25px;line-height:25px;font-family:'Liberation Sans',sans-serif;font-weight:400;color:#1f2328;transform:scaleX(0.8455);">KY</div>
<div class="t" style="left:2215.34px;top:710.63px;font-size:25px;line-height:25px;font-family:'Liberation Sans',sans-serif;font-weight:400;color:#1f2328;transform:scaleX(0.8278);">LOUISVILLE</div>
<div class="t" style="left:2417.49px;top:710.63px;font-size:25px;line-height:25px;font-family:'Liberation Sans',sans-serif;font-weight:400;color:#1f2328;transform:scaleX(1.0128);">40210</div>
<div class="t" style="left:516.69px;top:762.83px;font-size:25px;line-height:25px;font-family:'Liberation Sans',sans-serif;font-weight:400;color:#1f2328;transform:scaleX(0.9126);">14693</div>
<div class="t" style="left:692.09px;top:762.83px;font-size:25px;line-height:25px;font-family:'Liberation Sans',sans-serif;font-weight:400;color:#1f2328;transform:scaleX(0.9124);">0000014693</div>
<div class="t" style="left:903.78px;top:762.83px;font-size:25px;line-height:25px;font-family:'Liberation Sans',sans-serif;font-weight:400;color:#1f2328;transform:scaleX(0.9196);">0000014693-25-0000...</div>
<div class="t" style="left:1183.25px;top:762.83px;font-size:25px;line-height:25px;font-family:'Liberation Sans',sans-serif;font-weight:400;color:#1f2328;transform:scaleX(0.8728);">BROWN FORMAN CORP</div>
<div class="t" style="left:1587.84px;top:762.83px;font-size:25px;line-height:25px;font-family:'Liberation Sans',sans-serif;font-weight:400;color:#1f2328;transform:scaleX(0.9290);">2080</div>
<div class="t" style="left:1763.40px;top:762.83px;font-size:25px;line-height:25px;font-family:'Liberation Sans',sans-serif;font-weight:400;color:#1f2328;transform:scaleX(0.8538);">US</div>
<div class="t" style="left:2010.31px;top:762.83px;font-size:25px;line-height:25px;font-family:'Liberation Sans',sans-serif;font-weight:400;color:#1f2328;transform:scaleX(0.8455);">KY</div>
<div class="t" style="left:2215.34px;top:762.83px;font-size:25px;line-height:25px;font-family:'Liberation Sans',sans-serif;font-weight:400;color:#1f2328;transform:scaleX(0.8278);">LOUISVILLE</div>
<div class="t" style="left:2417.49px;top:762.83px;font-size:25px;line-height:25px;font-family:'Liberation Sans',sans-serif;font-weight:400;color:#1f2328;transform:scaleX(1.0128);">40210</div>
<div class="t" style="left:516.69px;top:815.03px;font-size:25px;line-height:25px;font-family:'Liberation Sans',sans-serif;font-weight:400;color:#1f2328;transform:scaleX(0.9126);">14693</div>
<div class="t" style="left:692.09px;top:815.03px;font-size:25px;line-height:25px;font-family:'Liberation Sans',sans-serif;font-weight:400;color:#1f2328;transform:scaleX(0.9124);">0000014693</div>
<div class="t" style="left:903.78px;top:815.03px;font-size:25px;line-height:25px;font-family:'Liberation Sans',sans-serif;font-weight:400;color:#1f2328;transform:scaleX(0.9196);">0000014693-25-0000...</div>
<div class="t" style="left:1183.25px;top:815.03px;font-size:25px;line-height:25px;font-family:'Liberation Sans',sans-serif;font-weight:400;color:#1f2328;transform:scaleX(0.8728);">BROWN FORMAN CORP</div>
<div class="t" style="left:1587.84px;top:815.03px;font-size:25px;line-height:25px;font-family:'Liberation Sans',sans-serif;font-weight:400;color:#1f2328;transform:scaleX(0.9290);">2080</div>
<div class="t" style="left:1763.40px;top:815.03px;font-size:25px;line-height:25px;font-family:'Liberation Sans',sans-serif;font-weight:400;color:#1f2328;transform:scaleX(0.8538);">US</div>
<div class="t" style="left:2010.31px;top:815.03px;font-size:25px;line-height:25px;font-family:'Liberation Sans',sans-serif;font-weight:400;color:#1f2328;transform:scaleX(0.8455);">KY</div>
<div class="t" style="left:2215.34px;top:815.03px;font-size:25px;line-height:25px;font-family:'Liberation Sans',sans-serif;font-weight:400;color:#1f2328;transform:scaleX(0.8278);">LOUISVILLE</div>
<div class="t" style="left:2417.49px;top:815.03px;font-size:25px;line-height:25px;font-family:'Liberation Sans',sans-serif;font-weight:400;color:#1f2328;transform:scaleX(1.0128);">40210</div>
<div class="t" style="left:516.69px;top:867.23px;font-size:25px;line-height:25px;font-family:'Liberation Sans',sans-serif;font-weight:400;color:#1f2328;transform:scaleX(0.9126);">14693</div>
<div class="t" style="left:692.09px;top:867.23px;font-size:25px;line-height:25px;font-family:'Liberation Sans',sans-serif;font-weight:400;color:#1f2328;transform:scaleX(0.9124);">0000014693</div>
<div class="t" style="left:903.78px;top:867.23px;font-size:25px;line-height:25px;font-family:'Liberation Sans',sans-serif;font-weight:400;color:#1f2328;transform:scaleX(0.9196);">0000014693-25-0000...</div>
<div class="t" style="left:1183.25px;top:867.23px;font-size:25px;line-height:25px;font-family:'Liberation Sans',sans-serif;font-weight:400;color:#1f2328;transform:scaleX(0.8728);">BROWN FORMAN CORP</div>
<div class="t" style="left:1587.84px;top:867.23px;font-size:25px;line-height:25px;font-family:'Liberation Sans',sans-serif;font-weight:400;color:#1f2328;transform:scaleX(0.9290);">2080</div>
<div class="t" style="left:1763.40px;top:867.23px;font-size:25px;line-height:25px;font-family:'Liberation Sans',sans-serif;font-weight:400;color:#1f2328;transform:scaleX(0.8538);">US</div>
<div class="t" style="left:2010.31px;top:867.23px;font-size:25px;line-height:25px;font-family:'Liberation Sans',sans-serif;font-weight:400;color:#1f2328;transform:scaleX(0.8455);">KY</div>
<div class="t" style="left:2215.34px;top:867.23px;font-size:25px;line-height:25px;font-family:'Liberation Sans',sans-serif;font-weight:400;color:#1f2328;transform:scaleX(0.8278);">LOUISVILLE</div>
<div class="t" style="left:2417.49px;top:867.23px;font-size:25px;line-height:25px;font-family:'Liberation Sans',sans-serif;font-weight:400;color:#1f2328;transform:scaleX(1.0128);">40210</div>
<div class="t" style="left:516.69px;top:919.43px;font-size:25px;line-height:25px;font-family:'Liberation Sans',sans-serif;font-weight:400;color:#1f2328;transform:scaleX(0.9126);">14693</div>
<div class="t" style="left:692.09px;top:919.43px;font-size:25px;line-height:25px;font-family:'Liberation Sans',sans-serif;font-weight:400;color:#1f2328;transform:scaleX(0.9124);">0000014693</div>
<div class="t" style="left:903.78px;top:919.43px;font-size:25px;line-height:25px;font-family:'Liberation Sans',sans-serif;font-weight:400;color:#1f2328;transform:scaleX(0.9196);">0000014693-25-0000...</div>
<div class="t" style="left:1183.25px;top:919.43px;font-size:25px;line-height:25px;font-family:'Liberation Sans',sans-serif;font-weight:400;color:#1f2328;transform:scaleX(0.8728);">BROWN FORMAN CORP</div>
<div class="t" style="left:1587.84px;top:919.43px;font-size:25px;line-height:25px;font-family:'Liberation Sans',sans-serif;font-weight:400;color:#1f2328;transform:scaleX(0.9290);">2080</div>
<div class="t" style="left:1763.40px;top:919.43px;font-size:25px;line-height:25px;font-family:'Liberation Sans',sans-serif;font-weight:400;color:#1f2328;transform:scaleX(0.8538);">US</div>
<div class="t" style="left:2010.31px;top:919.43px;font-size:25px;line-height:25px;font-family:'Liberation Sans',sans-serif;font-weight:400;color:#1f2328;transform:scaleX(0.8455);">KY</div>
<div class="t" style="left:2215.34px;top:919.43px;font-size:25px;line-height:25px;font-family:'Liberation Sans',sans-serif;font-weight:400;color:#1f2328;transform:scaleX(0.8278);">LOUISVILLE</div>
<div class="t" style="left:2417.49px;top:919.43px;font-size:25px;line-height:25px;font-family:'Liberation Sans',sans-serif;font-weight:400;color:#1f2328;transform:scaleX(1.0128);">40210</div>
<div class="t" style="left:516.69px;top:971.63px;font-size:25px;line-height:25px;font-family:'Liberation Sans',sans-serif;font-weight:400;color:#1f2328;transform:scaleX(0.9126);">14693</div>
<div class="t" style="left:692.09px;top:971.63px;font-size:25px;line-height:25px;font-family:'Liberation Sans',sans-serif;font-weight:400;color:#1f2328;transform:scaleX(0.9124);">0000014693</div>
<div class="t" style="left:903.78px;top:971.63px;font-size:25px;line-height:25px;font-family:'Liberation Sans',sans-serif;font-weight:400;color:#1f2328;transform:scaleX(0.9196);">0000014693-25-0000...</div>
<div class="t" style="left:1183.25px;top:971.63px;font-size:25px;line-height:25px;font-family:'Liberation Sans',sans-serif;font-weight:400;color:#1f2328;transform:scaleX(0.8728);">BROWN FORMAN CORP</div>
<div class="t" style="left:1587.84px;top:971.63px;font-size:25px;line-height:25px;font-family:'Liberation Sans',sans-serif;font-weight:400;color:#1f2328;transform:scaleX(0.9290);">2080</div>
<div class="t" style="left:1763.40px;top:971.63px;font-size:25px;line-height:25px;font-family:'Liberation Sans',sans-serif;font-weight:400;color:#1f2328;transform:scaleX(0.8538);">US</div>
<div class="t" style="left:2010.31px;top:971.63px;font-size:25px;line-height:25px;font-family:'Liberation Sans',sans-serif;font-weight:400;color:#1f2328;transform:scaleX(0.8455);">KY</div>
<div class="t" style="left:2215.34px;top:971.63px;font-size:25px;line-height:25px;font-family:'Liberation Sans',sans-serif;font-weight:400;color:#1f2328;transform:scaleX(0.8278);">LOUISVILLE</div>
<div class="t" style="left:2417.49px;top:971.63px;font-size:25px;line-height:25px;font-family:'Liberation Sans',sans-serif;font-weight:400;color:#1f2328;transform:scaleX(1.0128);">40210</div>
<div class="t" style="left:516.69px;top:1023.83px;font-size:25px;line-height:25px;font-family:'Liberation Sans',sans-serif;font-weight:400;color:#1f2328;transform:scaleX(0.9126);">14693</div>
<div class="t" style="left:692.09px;top:1023.83px;font-size:25px;line-height:25px;font-family:'Liberation Sans',sans-serif;font-weight:400;color:#1f2328;transform:scaleX(0.9124);">0000014693</div>
<div class="t" style="left:903.78px;top:1023.83px;font-size:25px;line-height:25px;font-family:'Liberation Sans',sans-serif;font-weight:400;color:#1f2328;transform:scaleX(0.9196);">0000014693-25-0000...</div>
<div class="t" style="left:1183.25px;top:1023.83px;font-size:25px;line-height:25px;font-family:'Liberation Sans',sans-serif;font-weight:400;color:#1f2328;transform:scaleX(0.8728);">BROWN FORMAN CORP</div>
<div class="t" style="left:1587.84px;top:1023.83px;font-size:25px;line-height:25px;font-family:'Liberation Sans',sans-serif;font-weight:400;color:#1f2328;transform:scaleX(0.9290);">2080</div>
<div class="t" style="left:1763.40px;top:1023.83px;font-size:25px;line-height:25px;font-family:'Liberation Sans',sans-serif;font-weight:400;color:#1f2328;transform:scaleX(0.8538);">US</div>
<div class="t" style="left:2010.31px;top:1023.83px;font-size:25px;line-height:25px;font-family:'Liberation Sans',sans-serif;font-weight:400;color:#1f2328;transform:scaleX(0.8455);">KY</div>
<div class="t" style="left:2215.34px;top:1023.83px;font-size:25px;line-height:25px;font-family:'Liberation Sans',sans-serif;font-weight:400;color:#1f2328;transform:scaleX(0.8278);">LOUISVILLE</div>
<div class="t" style="left:2417.49px;top:1023.83px;font-size:25px;line-height:25px;font-family:'Liberation Sans',sans-serif;font-weight:400;color:#1f2328;transform:scaleX(1.0128);">40210</div>
<div class="t" style="left:516.69px;top:1076.03px;font-size:25px;line-height:25px;font-family:'Liberation Sans',sans-serif;font-weight:400;color:#1f2328;transform:scaleX(0.9126);">14693</div>
<div class="t" style="left:692.09px;top:1076.03px;font-size:25px;line-height:25px;font-family:'Liberation Sans',sans-serif;font-weight:400;color:#1f2328;transform:scaleX(0.9124);">0000014693</div>
<div class="t" style="left:903.78px;top:1076.03px;font-size:25px;line-height:25px;font-family:'Liberation Sans',sans-serif;font-weight:400;color:#1f2328;transform:scaleX(0.9196);">0000014693-25-0000...</div>
<div class="t" style="left:1183.25px;top:1076.03px;font-size:25px;line-height:25px;font-family:'Liberation Sans',sans-serif;font-weight:400;color:#1f2328;transform:scaleX(0.8728);">BROWN FORMAN CORP</div>
<div class="t" style="left:1587.84px;top:1076.03px;font-size:25px;line-height:25px;font-family:'Liberation Sans',sans-serif;font-weight:400;color:#1f2328;transform:scaleX(0.9290);">2080</div>
<div class="t" style="left:1763.40px;top:1076.03px;font-size:25px;line-height:25px;font-family:'Liberation Sans',sans-serif;font-weight:400;color:#1f2328;transform:scaleX(0.8538);">US</div>
<div class="t" style="left:2010.31px;top:1076.03px;font-size:25px;line-height:25px;font-family:'Liberation Sans',sans-serif;font-weight:400;color:#1f2328;transform:scaleX(0.8455);">KY</div>
<div class="t" style="left:2215.34px;top:1076.03px;font-size:25px;line-height:25px;font-family:'Liberation Sans',sans-serif;font-weight:400;color:#1f2328;transform:scaleX(0.8278);">LOUISVILLE</div>
<div class="t" style="left:2417.49px;top:1076.03px;font-size:25px;line-height:25px;font-family:'Liberation Sans',sans-serif;font-weight:400;color:#1f2328;transform:scaleX(1.0128);">40210</div>
</div>
<div class="r" style="left:2478px;top:477px;width:30px;height:618px;background:#f9f9f9;"></div>
<svg class="r" style="left:2484px;top:487px;width:18px;height:15px;" viewBox="0 0 18 15" preserveAspectRatio="none"><path d="M9 1L17 14H1Z" fill="#8c8c8c" stroke="#8c8c8c" stroke-width="1.5" stroke-linejoin="round"/></svg>
<div class="r" style="left:2484px;top:514px;width:18px;height:36px;background:#8f8f8f;border-radius:9px;"></div>
<svg class="r" style="left:2484.5px;top:1072px;width:17.0px;height:14px;" viewBox="0 0 17 14" preserveAspectRatio="none"><path d="M1 1H16L8.5 13Z" fill="#8c8c8c" stroke="#8c8c8c" stroke-width="1.5" stroke-linejoin="round"/></svg>
<div class="r" style="left:500px;top:1095px;width:2008px;height:15px;background:#f8f8f8;"></div>
<svg class="r" style="left:510px;top:1101px;width:13px;height:13px;" viewBox="0 0 13 13" preserveAspectRatio="none"><path d="M12 1V12L1 12Z" fill="#8c8c8c"/></svg>
<div class="r" style="left:536px;top:1101px;width:189px;height:15px;background:#8f8f8f;border-radius:8px;"></div>
<svg class="r" style="left:2455.5px;top:1101px;width:14.5px;height:13px;" viewBox="0 0 14 13" preserveAspectRatio="none"><path d="M1 1L13 12H1Z" fill="#8c8c8c"/></svg>
<div class="r" style="left:2509px;top:0px;width:49px;height:1110px;background:#fff;"></div>
<div class="r" style="left:2558px;top:0px;width:2px;height:1110px;background:#1a1a1a;"></div>
<svg class="r" style="left:2542px;top:38px;width:16px;height:9px;" viewBox="0 0 16 9" preserveAspectRatio="none"><g fill="none" stroke="#5f6d7a" stroke-width="2.6" stroke-linejoin="round" stroke-linecap="round"><path d="M1.3 8L8 1.3L14.7 8"/></g></svg>
<svg class="r" style="left:2534px;top:103px;width:28px;height:31px;" viewBox="0 0 28 31" preserveAspectRatio="none"><g fill="none" stroke="#5f6d7a" stroke-width="2.4" stroke-linejoin="round" stroke-linecap="round"><path d="M14 2C21.5 2 27 6.5 27 12.5C27 18.5 21.5 23 14 23L10.5 29.5L10 22.5C5 21 1.5 17 1.5 12.5C1.5 6.5 7 2 14 2Z"/><circle cx="8.5" cy="12.5" r="0.8"/><circle cx="14" cy="12.5" r="0.8"/><circle cx="19.5" cy="12.5" r="0.8"/></g></svg>
<svg class="r" style="left:2530px;top:176px;width:36px;height:36px" viewBox="2530 176 36 36"><g fill="none" stroke="#5f6d7a" stroke-width="2.6" stroke-linejoin="round" stroke-linecap="round"><path d="M2543.5 204A13.8 13.8 0 1 0 2538.3 189"/><path d="M2550.5 185.5V193.5L2553.5 196.5"/></g></svg>
<svg class="r" style="left:2530px;top:188px;width:16px;height:13px" viewBox="2530 188 16 13"><path d="M2533.3 191.2H2543L2538.3 198Z" fill="#5f6d7a" stroke="#5f6d7a" stroke-width="1.4" stroke-linejoin="round"/></svg>
<svg class="r" style="left:2535px;top:254px;width:28px;height:28px;" viewBox="0 0 28 28" preserveAspectRatio="none"><g fill="none" stroke="#5f6d7a" stroke-width="2.4" stroke-linejoin="round" stroke-linecap="round"><path d="M14 1.5C15 9 18 12 26.5 14C18 16 15 19 14 26.5C13 19 10 16 1.5 14C10 12 13 9 14 1.5Z"/></g></svg>
<svg class="r" style="left:2538px;top:1096px;width:20px;height:16px;" viewBox="0 0 20 16" preserveAspectRatio="none"><defs><linearGradient id="av" x1="0" y1="1" x2="1" y2="0"><stop offset="0" stop-color="#f39a3a"/><stop offset="1" stop-color="#d63fd0"/></linearGradient></defs><circle cx="18" cy="16" r="13" fill="url(#av)"/></svg>
</div></body></html>
